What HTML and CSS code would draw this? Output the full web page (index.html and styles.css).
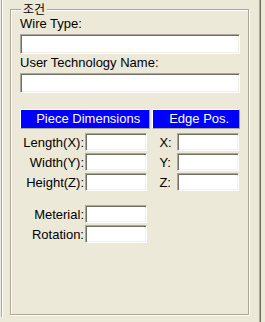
FILE: index.html
```html
<!DOCTYPE html>
<html lang="ko">
  <head>
    <meta charset="UTF-8" />
    <meta name="viewport" content="width=device-width, initial-scale=1.0" />
    <title>조건</title>
    <link rel="stylesheet" href="styles.css">
  </head>
  <body>
    <div class="screen">
      <div class="pane">
        <div class="group">
          <span class="group-title">조건</span>
          <label class="caption">Wire Type:</label>
          <input class="field" type="text">
          <label class="caption">User Technology Name:</label>
          <input class="field" type="text">

          <div class="dims">
            <div class="dims-col">
              <div class="dims-head">Piece Dimensions</div>
              <div class="row"><span class="row-label">Length(X):</span><input class="box" type="text"></div>
              <div class="row"><span class="row-label">Width(Y):</span><input class="box" type="text"></div>
              <div class="row"><span class="row-label">Height(Z):</span><input class="box" type="text"></div>
            </div>
            <div class="dims-col edge">
              <div class="dims-head">Edge Pos.</div>
              <div class="row"><span class="row-label">X:</span><input class="box" type="text"></div>
              <div class="row"><span class="row-label">Y:</span><input class="box" type="text"></div>
              <div class="row"><span class="row-label">Z:</span><input class="box" type="text"></div>
            </div>
          </div>

          <div class="extra">
            <div class="row"><span class="row-label">Meterial:</span><input class="box" type="text"></div>
            <div class="row"><span class="row-label">Rotation:</span><input class="box" type="text"></div>
          </div>
        </div>
      </div>
      <div class="rail"></div>
    </div>
  </body>
</html>
```

FILE: styles.css
```css
* {
  margin: 0;
  padding: 0;
  box-sizing: border-box;
}

body {
  background-color: #ece9d8;
  font-family: "Liberation Sans", Arial, sans-serif;
  font-size: 13px;
  color: #000;
}

.screen {
  display: flex;
  height: 322px;
}

.pane {
  margin-left: 1px;
  width: 258px;
  height: 317px;
  border-left: 1px solid #aca899;
  box-shadow: inset 1px 0 #fff;
  padding: 9px 0 0 8px;
}

.rail {
  width: 2px;
  height: 322px;
  border-left: 1px solid #aca899;
  background-color: #716f64;
}

.group {
  position: relative;
  width: 239px;
  height: 306px;
  border: 1px solid #aca899;
  box-shadow: inset 1px 1px #fff, 1px 1px #fff;
  padding: 6px 8px 0 9px;
}

.group-title {
  position: absolute;
  top: -10px;
  left: 10px;
  padding: 0 2px;
  background-color: #ece9d8;
  font-family: "Noto Sans CJK KR", sans-serif;
  font-size: 12px;
  line-height: 17px;
}

.caption {
  display: block;
  line-height: 15px;
  margin-bottom: 3px;
}

.field {
  display: block;
  width: 220px;
  height: 20px;
  margin-bottom: 1px;
  background-color: #fff;
  border: 1px solid;
  border-color: #aca899 #fff #fff #aca899;
  box-shadow: inset 1px 1px #716f64, inset -1px -1px #f1efe2;
  outline: none;
}

.dims {
  display: flex;
  gap: 2px;
  margin-top: 16px;
}

.dims-col {
  width: 131px;
}

.dims-col.edge {
  width: 88px;
}

.dims-head {
  height: 20px;
  margin-bottom: 4px;
  background-color: #0000ff;
  border: 1px solid;
  border-color: #fff #aca899 #aca899 #fff;
  color: #fff;
  line-height: 18px;
  text-align: center;
  padding-left: 6px;
}

.row {
  display: flex;
  align-items: center;
  height: 18px;
  margin-bottom: 2px;
}

.row-label {
  width: 65px;
  text-align: right;
  padding-right: 1px;
}

.edge .row-label {
  width: 25px;
  text-align: left;
  padding-left: 7px;
}

.box {
  width: 62px;
  height: 18px;
  background-color: #fff;
  border: 1px solid;
  border-color: #aca899 #fff #fff #aca899;
  box-shadow: inset 1px 1px #716f64, inset -1px -1px #f1efe2;
  outline: none;
}

.extra {
  margin-top: 12px;
}
```
